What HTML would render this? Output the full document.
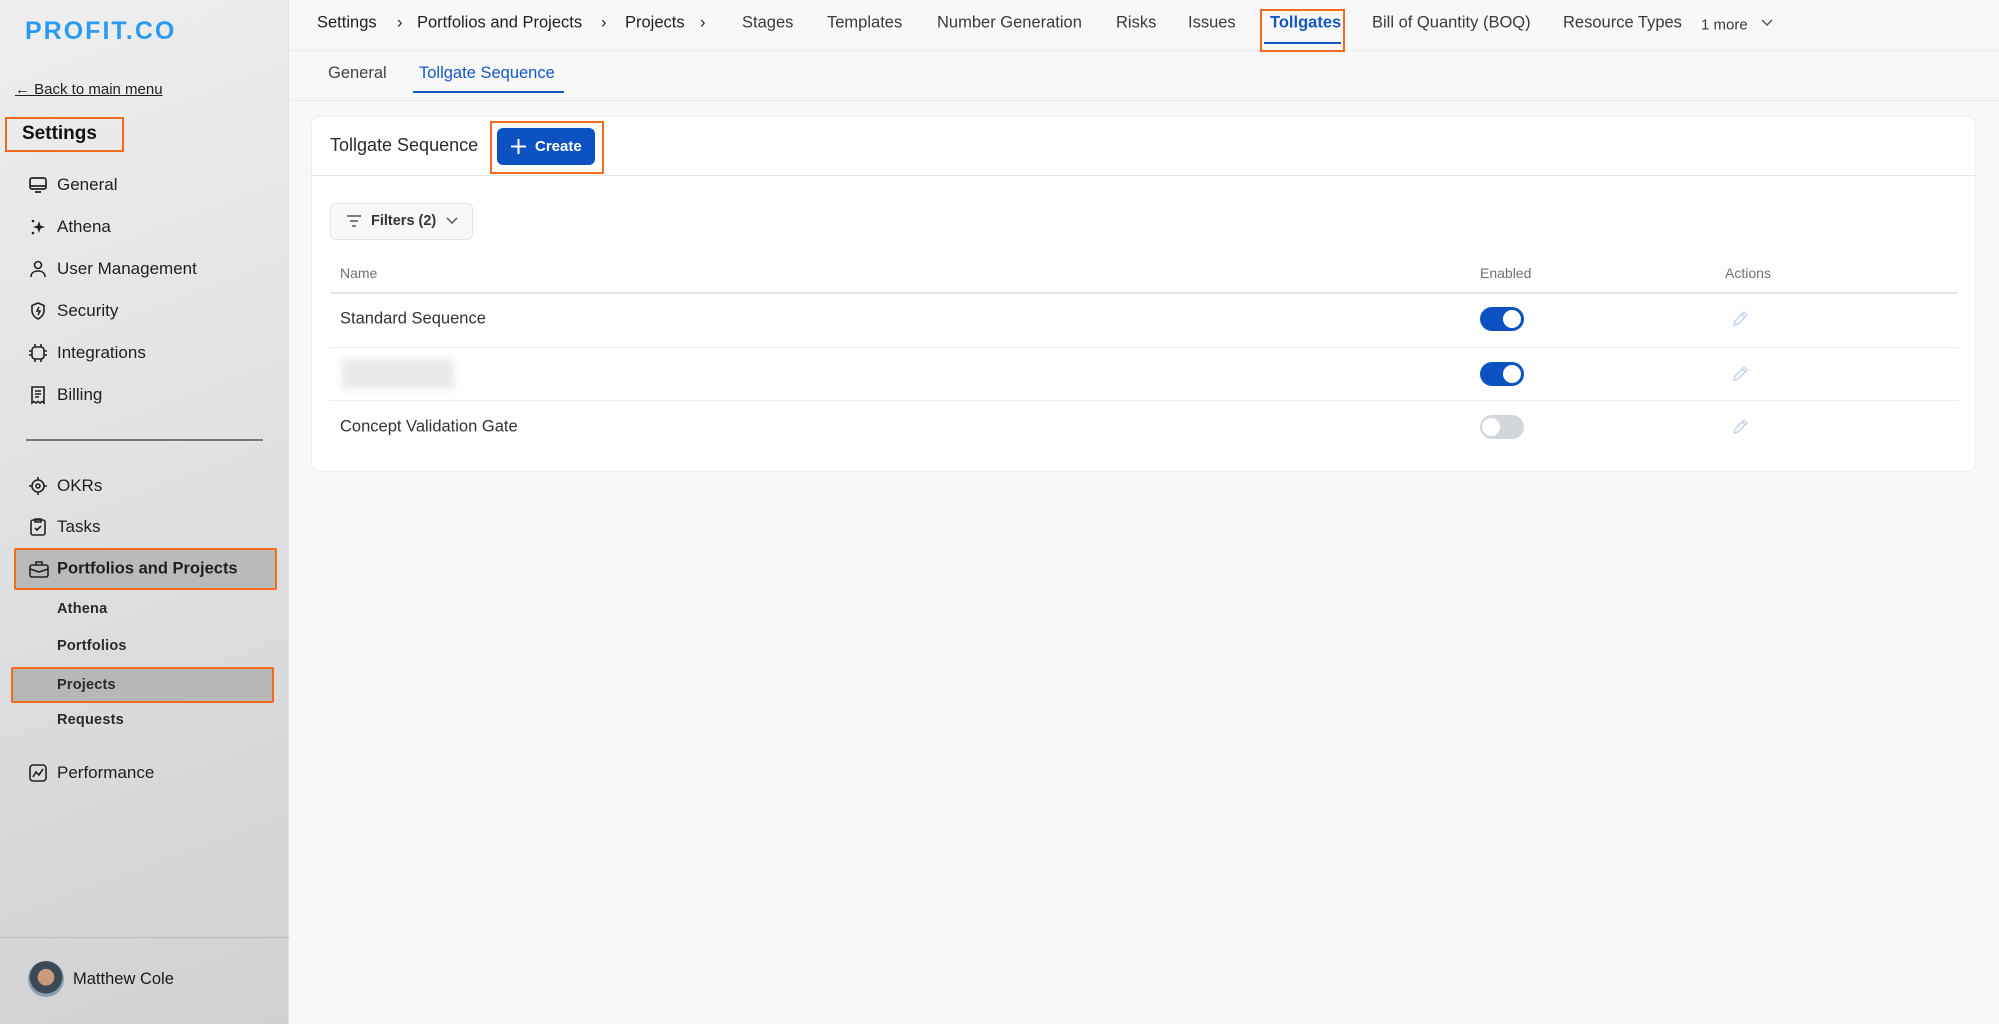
<!DOCTYPE html>
<html><head><meta charset="utf-8"><style>
*{box-sizing:border-box;margin:0;padding:0}
body{width:1999px;height:1024px;overflow:hidden;font-family:"Liberation Sans",sans-serif;background:#f8f8f8;position:relative;color:#1f2328}
.abs{position:absolute;white-space:nowrap}
#side{position:absolute;left:0;top:0;width:289px;height:1024px;background:linear-gradient(160deg,#efefef 0%,#e2e3e4 40%,#d0d1d3 100%);border-right:1px solid #e4e4e4}
.nav{position:absolute;left:57px;font-size:17px;color:#1f1f1f;transform:translateY(-50%)}
.ic{position:absolute;left:28px;transform:translateY(-50%)}
.sub{position:absolute;left:57px;font-size:14.5px;font-weight:bold;color:#2a2a2a;transform:translateY(-50%);letter-spacing:.2px}
.ob{position:absolute;border:2px solid #f26b1d}
.top{position:absolute;top:23px;font-size:16.5px;color:#3a3a3a;transform:translateY(-50%)}
.bc{color:#1f1f1f}
.th{position:absolute;top:273px;font-size:14px;color:#707070;transform:translateY(-50%)}
.td{position:absolute;left:340px;font-size:16.5px;color:#333;transform:translateY(-50%)}
.tg{position:absolute;left:1480px;width:44px;height:24px;border-radius:12px;background:#0c52c2}
.tg::after{content:"";position:absolute;right:3px;top:3px;width:18px;height:18px;border-radius:50%;background:#fff}
.tg.off{background:#d3d6db}
.tg.off::after{right:auto;left:2px}
.pen{position:absolute;left:1730px}
</style></head><body>
<div id="side">
 <div class="abs" style="left:25px;top:17px;font-size:25px;font-weight:bold;letter-spacing:2px;color:#2a9bf0">PROFIT.CO</div>
 <div class="abs" style="left:15px;top:81px;font-size:15px;text-decoration:underline;color:#222">← Back to main menu</div>
 <div class="ob" style="left:5px;top:117px;width:119px;height:35px"></div>
 <div class="abs" style="left:22px;top:123px;font-size:19px;font-weight:bold;color:#111">Settings</div>

 <svg class="ic" style="top:185px" width="20" height="20" viewBox="0 0 20 20" fill="none" stroke="#222" stroke-width="1.7"><rect x="2" y="3" width="16" height="11" rx="2"/><path d="M2 11h16M7 17h6"/></svg>
 <div class="nav" style="top:185px">General</div>
 <svg class="ic" style="top:227px" width="20" height="20" viewBox="0 0 20 20" fill="#222"><path d="M11 4l1.5 4.5L17 10l-4.5 1.5L11 16l-1.5-4.5L5 10l4.5-1.5z"/><circle cx="5" cy="4" r="1.3"/><circle cx="5" cy="16" r="1.3"/></svg>
 <div class="nav" style="top:227px">Athena</div>
 <svg class="ic" style="top:269px" width="20" height="20" viewBox="0 0 20 20" fill="none" stroke="#222" stroke-width="1.6"><circle cx="10" cy="6" r="3.5"/><path d="M3 18c0-4 3-6 7-6s7 2 7 6"/></svg>
 <div class="nav" style="top:269px">User Management</div>
 <svg class="ic" style="top:311px" width="20" height="20" viewBox="0 0 20 20" fill="none" stroke="#222" stroke-width="1.6"><path d="M10 2l6 2.5v5c0 4-3 7-6 8.5-3-1.5-6-4.5-6-8.5v-5z"/><path d="M11 6l-2 4h3l-2 4"/></svg>
 <div class="nav" style="top:311px">Security</div>
 <svg class="ic" style="top:353px" width="20" height="20" viewBox="0 0 20 20" fill="none" stroke="#222" stroke-width="1.6"><rect x="4" y="4" width="12" height="12" rx="3"/><path d="M7 1v3M13 1v3M7 16v3M13 16v3M1 8h3M1 12h3M16 8h3M16 12h3"/></svg>
 <div class="nav" style="top:353px">Integrations</div>
 <svg class="ic" style="top:395px" width="20" height="20" viewBox="0 0 20 20" fill="none" stroke="#222" stroke-width="1.6"><path d="M4 2h12v16l-2-1.5-2 1.5-2-1.5-2 1.5-2-1.5-2 1.5z"/><path d="M7 6h6M7 9h6M7 12h4"/></svg>
 <div class="nav" style="top:395px">Billing</div>

 <div class="abs" style="left:26px;top:439px;width:237px;height:2px;background:#7a7a7a"></div>

 <svg class="ic" style="top:486px" width="20" height="20" viewBox="0 0 20 20" fill="none" stroke="#222" stroke-width="1.6"><circle cx="10" cy="10" r="6"/><circle cx="10" cy="10" r="2"/><path d="M10 1v3M10 16v3M1 10h3M16 10h3"/></svg>
 <div class="nav" style="top:486px">OKRs</div>
 <svg class="ic" style="top:527px" width="20" height="20" viewBox="0 0 20 20" fill="none" stroke="#222" stroke-width="1.6"><rect x="3" y="3" width="14" height="15" rx="2"/><path d="M7 2h6v3H7zM7 11l2 2 4-4"/></svg>
 <div class="nav" style="top:527px">Tasks</div>
 <div class="abs" style="left:14px;top:548px;width:263px;height:42px;background:#b9babc;border:2px solid #f26b1d;border-radius:2px"></div>
 <svg class="ic" style="top:569px" width="22" height="20" viewBox="0 0 22 20" fill="none" stroke="#222" stroke-width="1.6"><rect x="2" y="6" width="18" height="12" rx="2"/><path d="M8 6V3h6v3M2 10l9 3 9-3"/></svg>
 <div class="nav" style="top:569px;font-weight:bold;font-size:16.5px">Portfolios and Projects</div>
 <div class="sub" style="top:609px">Athena</div>
 <div class="sub" style="top:646px">Portfolios</div>
 <div class="abs" style="left:11px;top:667px;width:263px;height:36px;background:#b6b7b9;border:2px solid #f26b1d;border-radius:2px"></div>
 <div class="sub" style="top:685px">Projects</div>
 <div class="sub" style="top:720px">Requests</div>
 <svg class="ic" style="top:773px" width="20" height="20" viewBox="0 0 20 20" fill="none" stroke="#222" stroke-width="1.6"><rect x="2" y="2" width="16" height="16" rx="3"/><path d="M5 14l3-5 3 3 4-6"/></svg>
 <div class="nav" style="top:773px">Performance</div>

 <div class="abs" style="left:0;top:937px;width:289px;height:1px;background:#bdbdbd"></div>
 <div class="abs" style="left:28px;top:961px;width:36px;height:36px;border-radius:50%;background:radial-gradient(circle at 50% 45%,#c99a7c 0 30%,#3b4a55 32% 60%,#8aa0b0 62%)"></div>
 <div class="abs" style="left:73px;top:970px;font-size:16.5px;color:#1a1a1a">Matthew Cole</div>
</div>

<div class="abs" style="left:289px;top:50px;width:1710px;height:1px;background:#ececec"></div>
<div class="top bc" style="left:317px">Settings</div>
<div class="top bc" style="left:397px">›</div>
<div class="top bc" style="left:417px">Portfolios and Projects</div>
<div class="top bc" style="left:601px">›</div>
<div class="top bc" style="left:625px">Projects</div>
<div class="top bc" style="left:700px">›</div>
<div class="top" style="left:742px">Stages</div>
<div class="top" style="left:827px">Templates</div>
<div class="top" style="left:937px">Number Generation</div>
<div class="top" style="left:1116px">Risks</div>
<div class="top" style="left:1188px">Issues</div>
<div class="top" style="left:1270px;color:#1556c4;font-weight:bold">Tollgates</div>
<div class="abs" style="left:1264px;top:42px;width:77px;height:2px;background:#1556c4"></div>
<div class="ob" style="left:1260px;top:9px;width:85px;height:43px"></div>
<div class="top" style="left:1372px">Bill of Quantity (BOQ)</div>
<div class="top" style="left:1563px">Resource Types</div>
<div class="top" style="left:1701px;font-size:15px;top:25px">1 more</div>
<svg class="abs" style="left:1760px;top:18px" width="14" height="10" viewBox="0 0 14 10" fill="none" stroke="#555" stroke-width="1.5"><path d="M2 2l5 5 5-5"/></svg>

<div class="abs" style="left:289px;top:100px;width:1710px;height:1px;background:#ececec"></div>
<div class="abs" style="left:328px;top:64px;font-size:16.5px;color:#444">General</div>
<div class="abs" style="left:419px;top:64px;font-size:16.5px;color:#1556c4">Tollgate Sequence</div>
<div class="abs" style="left:413px;top:91px;width:151px;height:2px;background:#1556c4"></div>

<div class="abs" style="left:311px;top:116px;width:1665px;height:356px;background:#fff;border:1px solid #eeeeee;border-radius:8px"></div>
<div class="abs" style="left:311px;top:175px;width:1665px;height:1px;background:#e6e6e6"></div>
<div class="abs" style="left:330px;top:135px;font-size:18px;color:#2a2a2a">Tollgate Sequence</div>
<div class="abs" style="left:497px;top:128px;width:98px;height:37px;background:#0c52c2;border-radius:6px;color:#fff;font-size:15px;font-weight:bold;line-height:37px;padding-left:38px">Create</div>
<svg class="abs" style="left:510px;top:138px" width="17" height="17" viewBox="0 0 17 17" stroke="#fff" stroke-width="2"><path d="M8.5 1v15M1 8.5h15"/></svg>
<div class="ob" style="left:490px;top:121px;width:114px;height:53px"></div>

<div class="abs" style="left:330px;top:203px;width:143px;height:37px;background:#f7f8f9;border:1px solid #e3e5e8;border-radius:6px"></div>
<svg class="abs" style="left:346px;top:214px" width="16" height="14" viewBox="0 0 16 14" stroke="#555" stroke-width="1.5"><path d="M1 2h14M4 7h8M6 12h4"/></svg>
<div class="abs" style="left:371px;top:213px;font-size:14.5px;font-weight:bold;color:#333">Filters (2)</div>
<svg class="abs" style="left:445px;top:216px" width="14" height="10" viewBox="0 0 14 10" fill="none" stroke="#555" stroke-width="1.5"><path d="M2 2l5 5 5-5"/></svg>

<div class="th" style="left:340px">Name</div>
<div class="th" style="left:1480px">Enabled</div>
<div class="th" style="left:1725px">Actions</div>
<div class="abs" style="left:330px;top:292px;width:1628px;height:2px;background:#e4e4e4"></div>
<div class="abs" style="left:330px;top:347px;width:1628px;height:1px;background:#ebedf0"></div>
<div class="abs" style="left:330px;top:400px;width:1628px;height:1px;background:#ebedf0"></div>

<div class="td" style="top:319px">Standard Sequence</div>
<div class="abs" style="left:342px;top:359px;width:112px;height:30px;background:#e9e9e9;filter:blur(4px)"></div>
<div class="td" style="top:427px">Concept Validation Gate</div>

<div class="tg" style="top:307px"></div>
<div class="tg" style="top:362px"></div>
<div class="tg off" style="top:415px"></div>

<svg class="pen" style="top:309px" width="20" height="20" viewBox="0 0 20 20" fill="none" stroke="#c3d2ee" stroke-width="1.4"><path d="M4 16l1-4 9-9 3 3-9 9zM12 5l3 3"/></svg>
<svg class="pen" style="top:364px" width="20" height="20" viewBox="0 0 20 20" fill="none" stroke="#c3d2ee" stroke-width="1.4"><path d="M4 16l1-4 9-9 3 3-9 9zM12 5l3 3"/></svg>
<svg class="pen" style="top:417px" width="20" height="20" viewBox="0 0 20 20" fill="none" stroke="#c3d2ee" stroke-width="1.4"><path d="M4 16l1-4 9-9 3 3-9 9zM12 5l3 3"/></svg>
</body></html>
